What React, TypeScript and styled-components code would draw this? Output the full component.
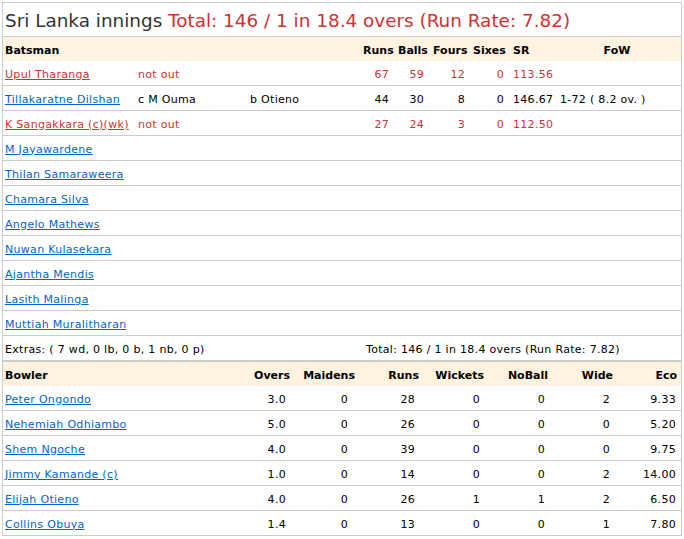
import React from "react";
import styled, { createGlobalStyle } from "styled-components";

const Global = createGlobalStyle`
  html, body { margin: 0; padding: 0; background: #fff; }
  body { font-family: "DejaVu Sans", Verdana, sans-serif; font-size: 11px; color: #000; }
`;

const RED = "#cc3333";
const BLUE = "#0066cc";
const LINE = "#cccccc";
const CREAM = "#fdf3e0";

const Card = styled.div`
  margin: 2px;
  border: 1px solid ${LINE};
  width: 678px;
  background: #fff;
`;

const Title = styled.div`
  height: 30px;
  padding: 3px 0 0 2px;
  line-height: 30px;
  font-size: 18.4px;
  color: #333;
  border-bottom: 1px solid ${LINE};
  white-space: nowrap;
`;

const TitleTotal = styled.span`
  color: ${RED};
`;

const Row = styled.div<{ $cols: string; $head?: boolean; $thick?: boolean }>`
  display: grid;
  grid-template-columns: ${(p) => p.$cols};
  height: 24px;
  align-items: center;
  background: ${(p) => (p.$head ? CREAM : "#fff")};
  font-weight: ${(p) => (p.$head ? "bold" : "normal")};
  letter-spacing: ${(p) => (p.$head ? "0" : "0.3px")};
  border-bottom: ${(p) => (p.$head ? "none" : `${p.$thick ? 2 : 1}px solid ${LINE}`)};
  white-space: nowrap;
  &:last-child { border-bottom: none; }
`;

const Cell = styled.div<{ $align?: "left" | "right" | "center"; $pl?: number; $pr?: number; $red?: boolean; $span?: number }>`
  text-align: ${(p) => p.$align || "left"};
  padding-left: ${(p) => p.$pl ?? 0}px;
  padding-right: ${(p) => p.$pr ?? 0}px;
  padding-top: 2px;
  color: ${(p) => (p.$red ? RED : "inherit")};
  grid-column: ${(p) => (p.$span ? `span ${p.$span}` : "auto")};
`;

const Name = styled.a<{ $red?: boolean }>`
  color: ${(p) => (p.$red ? RED : BLUE)};
  text-decoration: underline;
  cursor: pointer;
`;

const batCols = "132px 112px 112px 35px 35px 40px 40px 46px 1fr";
const bowlCols = "247px 41px 65px 64px 65px 64px 65px 1fr";

type Bat = { name: string; how?: string; bowler?: string; r?: string; b?: string; f?: string; s?: string; sr?: string; fow?: string; red?: boolean };

const batsmen: Bat[] = [
  { name: "Upul Tharanga", how: "not out", r: "67", b: "59", f: "12", s: "0", sr: "113.56", red: true },
  { name: "Tillakaratne Dilshan", how: "c M Ouma", bowler: "b Otieno", r: "44", b: "30", f: "8", s: "0", sr: "146.67", fow: "1-72 ( 8.2 ov. )" },
  { name: "K Sangakkara (c)(wk)", how: "not out", r: "27", b: "24", f: "3", s: "0", sr: "112.50", red: true },
  { name: "M Jayawardene" },
  { name: "Thilan Samaraweera" },
  { name: "Chamara Silva" },
  { name: "Angelo Mathews" },
  { name: "Nuwan Kulasekara" },
  { name: "Ajantha Mendis" },
  { name: "Lasith Malinga" },
  { name: "Muttiah Muralitharan" },
];

const bowlers = [
  ["Peter Ongondo", "3.0", "0", "28", "0", "0", "2", "9.33"],
  ["Nehemiah Odhiambo", "5.0", "0", "26", "0", "0", "0", "5.20"],
  ["Shem Ngoche", "4.0", "0", "39", "0", "0", "0", "9.75"],
  ["Jimmy Kamande (c)", "1.0", "0", "14", "0", "0", "2", "14.00"],
  ["Elijah Otieno", "4.0", "0", "26", "1", "1", "2", "6.50"],
  ["Collins Obuya", "1.4", "0", "13", "0", "0", "1", "7.80"],
];

const bowlHeads = ["Overs", "Maidens", "Runs", "Wickets", "NoBall", "Wide", "Eco"];
const headPr = [1, 1, 1, 1, 1, 1, 4];
const valPr = [5, 8, 5, 5, 4, 4, 5];

export default function App() {
  return (
    <>
      <Global />
      <Card>
        <Title>
          Sri Lanka innings <TitleTotal>Total: 146 / 1 in 18.4 overs (Run Rate: 7.82)</TitleTotal>
        </Title>

        <Row $cols={batCols} $head>
          <Cell $pl={2}>Batsman</Cell>
          <Cell />
          <Cell />
          <Cell $pl={4}>Runs</Cell>
          <Cell $pl={4}>Balls</Cell>
          <Cell $pl={4}>Fours</Cell>
          <Cell $pl={4}>Sixes</Cell>
          <Cell $pl={4}>SR</Cell>
          <Cell $align="center" $pr={2}>FoW</Cell>
        </Row>
        {batsmen.map((b) => (
          <Row $cols={batCols} key={b.name}>
            <Cell $pl={2}>
              <Name $red={b.red}>{b.name}</Name>
            </Cell>
            <Cell $pl={3} $red={b.red}>{b.how}</Cell>
            <Cell $pl={3}>{b.bowler}</Cell>
            <Cell $align="right" $pr={5} $red={b.red}>{b.r}</Cell>
            <Cell $align="right" $pr={5} $red={b.red}>{b.b}</Cell>
            <Cell $align="right" $pr={4} $red={b.red}>{b.f}</Cell>
            <Cell $align="right" $pr={5} $red={b.red}>{b.s}</Cell>
            <Cell $pl={4} $red={b.red}>{b.sr}</Cell>
            <Cell $pl={5}>{b.fow}</Cell>
          </Row>
        ))}
        <Row $cols={batCols} $thick>
          <Cell $pl={2} $span={3}>Extras: ( 7 wd, 0 lb, 0 b, 1 nb, 0 p)</Cell>
          <Cell $pl={7} $span={6}>Total: 146 / 1 in 18.4 overs (Run Rate: 7.82)</Cell>
        </Row>

        <Row $cols={bowlCols} $head>
          <Cell $pl={2}>Bowler</Cell>
          {bowlHeads.map((h, i) => (
            <Cell key={h} $align="right" $pr={headPr[i]}>{h}</Cell>
          ))}
        </Row>
        {bowlers.map((row) => (
          <Row $cols={bowlCols} key={row[0]}>
            <Cell $pl={2}>
              <Name>{row[0]}</Name>
            </Cell>
            {row.slice(1).map((v, i) => (
              <Cell key={i} $align="right" $pr={valPr[i]}>{v}</Cell>
            ))}
          </Row>
        ))}
      </Card>
    </>
  );
}
